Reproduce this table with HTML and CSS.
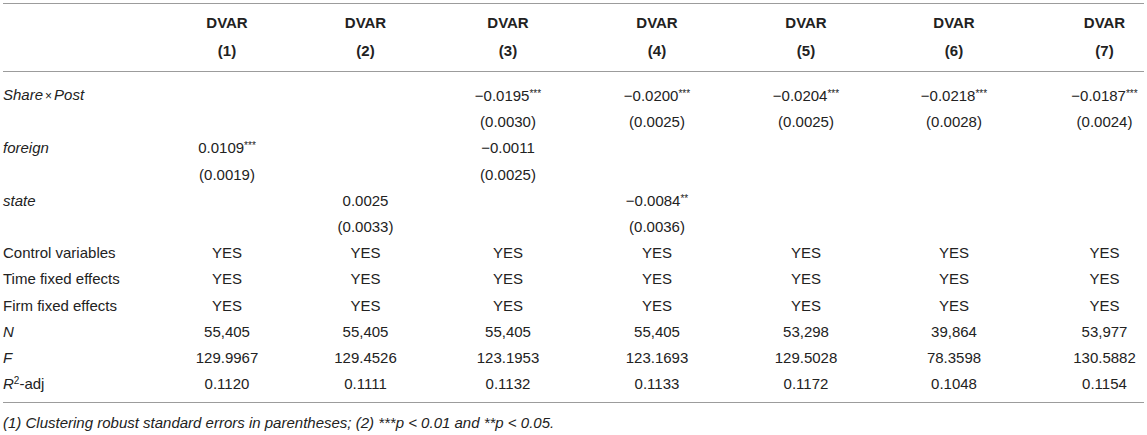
FILE: index.html
```html
<!DOCTYPE html>
<html lang="en">
<head>
<meta charset="utf-8">
<title>Regression table</title>
<link rel="stylesheet" href="styles.css">
</head>
<body>
<div class="wrap">
<table class="reg">
  <colgroup>
    <col class="c-label">
    <col class="c1"><col class="c2"><col class="c3"><col class="c4"><col class="c5"><col class="c6"><col class="c7">
  </colgroup>
  <thead>
    <tr class="h1">
      <th></th>
      <th>DVAR</th><th>DVAR</th><th>DVAR</th><th>DVAR</th><th>DVAR</th><th>DVAR</th><th class="last">DVAR</th>
    </tr>
    <tr class="h2">
      <th></th>
      <th>(1)</th><th>(2)</th><th>(3)</th><th>(4)</th><th>(5)</th><th>(6)</th><th class="last">(7)</th>
    </tr>
  </thead>
  <tbody>
    <tr class="first">
      <td class="lbl"><i>Share</i><span class="times">×</span><i>Post</i></td>
      <td></td><td></td>
      <td>−0.0195<sup class="st">***</sup></td>
      <td>−0.0200<sup class="st">***</sup></td>
      <td>−0.0204<sup class="st">***</sup></td>
      <td>−0.0218<sup class="st">***</sup></td>
      <td class="last">−0.0187<sup class="st">***</sup></td>
    </tr>
    <tr>
      <td class="lbl"></td>
      <td></td><td></td>
      <td>(0.0030)</td><td>(0.0025)</td><td>(0.0025)</td><td>(0.0028)</td><td class="last">(0.0024)</td>
    </tr>
    <tr>
      <td class="lbl"><i>foreign</i></td>
      <td>0.0109<sup class="st">***</sup></td><td></td>
      <td>−0.0011</td><td></td><td></td><td></td><td class="last"></td>
    </tr>
    <tr>
      <td class="lbl"></td>
      <td>(0.0019)</td><td></td>
      <td>(0.0025)</td><td></td><td></td><td></td><td class="last"></td>
    </tr>
    <tr>
      <td class="lbl"><i>state</i></td>
      <td></td><td>0.0025</td><td></td>
      <td>−0.0084<sup class="st">**</sup></td><td></td><td></td><td class="last"></td>
    </tr>
    <tr>
      <td class="lbl"></td>
      <td></td><td>(0.0033)</td><td></td>
      <td>(0.0036)</td><td></td><td></td><td class="last"></td>
    </tr>
    <tr>
      <td class="lbl">Control variables</td>
      <td>YES</td><td>YES</td><td>YES</td><td>YES</td><td>YES</td><td>YES</td><td class="last">YES</td>
    </tr>
    <tr>
      <td class="lbl">Time fixed effects</td>
      <td>YES</td><td>YES</td><td>YES</td><td>YES</td><td>YES</td><td>YES</td><td class="last">YES</td>
    </tr>
    <tr>
      <td class="lbl">Firm fixed effects</td>
      <td>YES</td><td>YES</td><td>YES</td><td>YES</td><td>YES</td><td>YES</td><td class="last">YES</td>
    </tr>
    <tr>
      <td class="lbl"><i>N</i></td>
      <td>55,405</td><td>55,405</td><td>55,405</td><td>55,405</td><td>53,298</td><td>39,864</td><td class="last">53,977</td>
    </tr>
    <tr>
      <td class="lbl"><i>F</i></td>
      <td>129.9967</td><td>129.4526</td><td>123.1953</td><td>123.1693</td><td>129.5028</td><td>78.3598</td><td class="last">130.5882</td>
    </tr>
    <tr class="final">
      <td class="lbl"><i>R</i><sup class="sq">2</sup>-adj</td>
      <td>0.1120</td><td>0.1111</td><td>0.1132</td><td>0.1133</td><td>0.1172</td><td>0.1048</td><td class="last">0.1154</td>
    </tr>
  </tbody>
</table>
<p class="note"><i>(1) Clustering robust standard errors in parentheses; (2) ***p &lt; 0.01 and **p &lt; 0.05.</i></p>
</div>
</body>
</html>
```

FILE: styles.css
```css
html, body {
  margin: 0;
  padding: 0;
  background: #ffffff;
}

body {
  font-family: "Liberation Sans", Arial, Helvetica, sans-serif;
  color: #222222;
}

.wrap {
  padding: 3px 3px 0 3px;
}

.reg {
  width: 1141px;
  table-layout: fixed;
  border-collapse: collapse;
  font-size: 15px;
  border-top: 1px solid #9c9c9c;
  border-bottom: 1px solid #9c9c9c;
}

.c-label { width: 155px; }
.c1 { width: 138px; }
.c2 { width: 139px; }
.c3 { width: 146px; }
.c4 { width: 152px; }
.c5 { width: 146px; }
.c6 { width: 150px; }
.c7 { width: 115px; }

.reg th,
.reg td {
  padding: 0;
  text-align: center;
  white-space: nowrap;
  font-weight: normal;
}

.reg thead th {
  font-weight: bold;
  line-height: 20px;
}

.reg .h1 th { padding-top: 9px; }
.reg .h2 th {
  padding-top: 8px;
  padding-bottom: 10px;
  border-bottom: 1px solid #9c9c9c;
}

.reg tbody td {
  line-height: 26.2px;
  height: 26.2px;
}

.reg .first td { padding-top: 10px; }
.reg .final td { padding-bottom: 5px; }

.reg .lbl {
  text-align: left;
}

.reg .last {
  padding-left: 36px;
}

.times {
  font-size: 12px;
  padding: 0 2px;
}

.st {
  font-size: 10px;
  line-height: 0;
  vertical-align: 4px;
}

.sq {
  font-size: 10px;
  line-height: 0;
  vertical-align: 5px;
}

.note {
  margin: 11px 0 0 0;
  font-size: 15px;
  line-height: 18px;
  color: #222222;
}
```
